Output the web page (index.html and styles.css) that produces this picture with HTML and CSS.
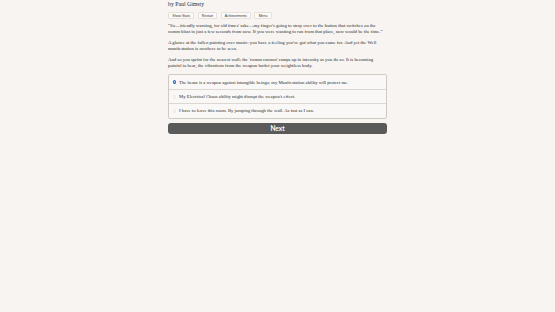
FILE: index.html
```html
<html>
<head>
    <link rel="stylesheet" href="styles.css">
</head>
<body>
    <div class="container">
    <div class="author">by Paul Gimsty</div>
    <div class="buttons">
        <button class="spacedLink">Show Stats</button>
        <button class="spacedLink">Restart</button>
        <button class="spacedLink">Achievements</button>
        <button class="spacedLink">Menu</button>
    </div>
    <div id="text">
        <p>&ldquo;So&mdash;friendly warning, for old times' sake&mdash;my finger's going to stray over to the button that switches on the comm blast in just a few seconds from now. If you were wanting to run from that place, now would be the time.&rdquo;</p>
        <p>A glance at the fallen painting over music: you have a feeling you've got what you came for. And yet the Well manifestation is nowhere to be seen.</p>
        <p>And so you sprint for the nearest wall; the 'comm cannon' ramps up in intensity as you do so. It is becoming painful to hear, the vibrations from the weapon buffet your weightless body.</p>
    </div>
    <form class="choice">
        <label class="row first"><span class="radio on"></span>The beam is a weapon against intangible beings; my Manifestation ability will protect me.</label>
        <label class="row"><span class="radio"></span>My Electrical Chaos ability might disrupt the weapon's effect.</label>
        <label class="row last"><span class="radio"></span>I have to leave this room. By jumping through the wall. As fast as I can.</label>
    </form>
    <button class="next">Next</button>
    </div>
</body>
</html>
```
FILE: styles.css
```css
body {
    margin: 0;
    background-color: #f7f4f1;
    color: #2b2b2b;
    font-family: Georgia, "Liberation Serif", serif;
}
.container {
    width: 219px;
    margin: 0 auto;
    padding-top: 0.5px;
}
.author {
    font-size: 5.8px;
    line-height: 7px;
}
.buttons {
    display: flex;
    gap: 3.2px;
    margin-top: 4.5px;
}
.spacedLink {
    font-family: "Liberation Sans", sans-serif;
    font-size: 3.5px;
    height: 6.5px;
    line-height: 6px;
    padding: 0 3.3px;
    background-color: #fbfaf8;
    border: 0.5px solid #e6e1dc;
    border-radius: 1px;
    color: #333;
}
#text {
    font-size: 4.75px;
    line-height: 6px;
    margin-top: 4.5px;
}
#text p {
    margin: 0 0 5px 0;
}
.choice {
    margin: 0;
    margin-top: 5px;
    border: 0.7px solid #cfcac4;
    border-radius: 2px;
    background-color: #faf8f6;
}
.row {
    display: flex;
    align-items: center;
    height: 14.2px;
    font-size: 4.7px;
    padding-left: 3.5px;
    border-top: 0.7px solid #dcd7d1;
    box-sizing: border-box;
    color: #2b2b2b;
}
.row.first {
    border-top: none;
}
.radio {
    width: 3.6px;
    height: 3.6px;
    border-radius: 50%;
    margin-right: 3px;
    box-sizing: border-box;
    border: 0.4px solid #ece6df;
    background-color: #fbfaf8;
}
.radio.on {
    background: radial-gradient(circle, #ffffff 0 16%, #2f6fb8 24%);
    border: none;
}
.next {
    display: block;
    width: 100%;
    height: 11px;
    margin-top: 4.5px;
    background-color: #5a5a5a;
    color: #fff;
    border: none;
    border-radius: 3px;
    font-family: "Lato", "Liberation Sans", sans-serif;
    font-weight: bold;
    font-size: 6.5px;
}
```
